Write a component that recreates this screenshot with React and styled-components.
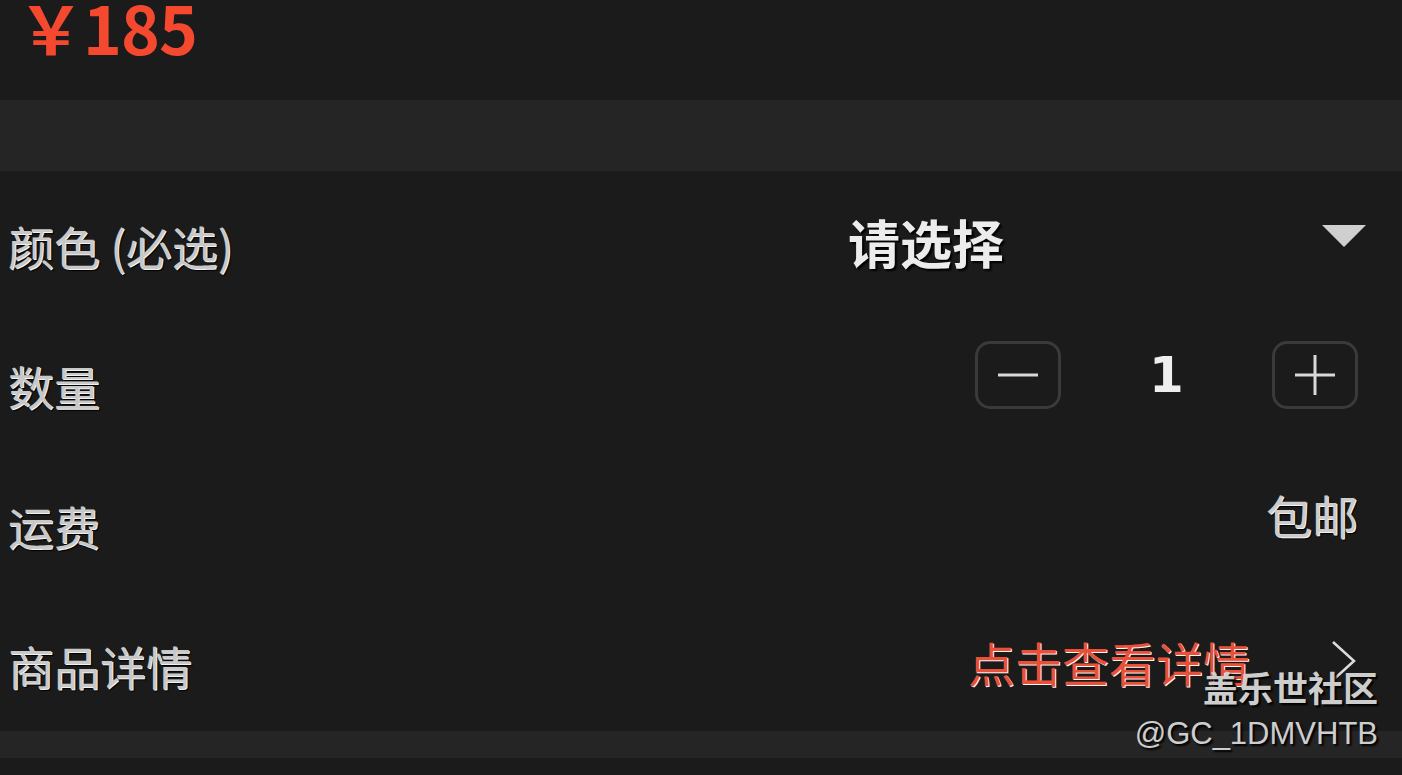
import React from "react";
import styled, { createGlobalStyle } from "styled-components";

const GlobalStyle = createGlobalStyle`
  html, body {
    margin: 0;
    padding: 0;
    background: #1b1b1b;
  }
  body {
    font-family: "Noto Sans CJK SC", "Noto Sans", sans-serif;
  }
`;

const Page = styled.div`
  width: 1402px;
  height: 775px;
  overflow: hidden;
  position: relative;
  background: #1b1b1b;
`;

const PriceBar = styled.div`
  height: 100px;
  overflow: hidden;
  padding-left: 18px;
`;

const Price = styled.div`
  margin-top: -26px;
  font-size: 66px;
  line-height: 104px;
  font-weight: 700;
  color: #f4492f;
  letter-spacing: -1px;
`;

const Divider = styled.div`
  height: ${(p) => p.h}px;
  background: #252525;
`;

const List = styled.div`
  display: flex;
  flex-direction: column;
`;

const Row = styled.div`
  height: 140px;
  display: flex;
  align-items: center;
  justify-content: space-between;
  padding: 0 44px 0 8px;
`;

const Label = styled.div`
  font-size: 46px;
  color: #c8c8c8;
  text-shadow: 1px 1px 0 #f2f2f2, 2px 2px 1px #000;
  margin-top: ${(p) => p.mt || 0}px;
`;

const SelectWrap = styled.div`
  flex: 1;
  display: flex;
  align-items: center;
  justify-content: flex-end;
  margin-right: -8px;
`;

const SelectText = styled.div`
  font-size: 52px;
  font-weight: 700;
  color: #ececec;
  text-shadow: 2px 2px 2px #000;
  margin-right: 318px;
`;

const Triangle = styled.div`
  width: 0;
  height: 0;
  border-left: 22px solid transparent;
  border-right: 22px solid transparent;
  border-top: 22px solid #cfcfcf;
  margin-top: -10px;
`;

const Stepper = styled.div`
  display: flex;
  align-items: center;
  margin-top: -12px;
`;

const StepButton = styled.div`
  width: 86px;
  height: 68px;
  box-sizing: border-box;
  border: 3px solid #3a3a3a;
  border-radius: 15px;
  display: flex;
  align-items: center;
  justify-content: center;
`;

const Count = styled.div`
  width: 211px;
  text-align: center;
  font-family: "DejaVu Sans", sans-serif;
  font-size: 50px;
  font-weight: 700;
  color: #eeeeee;
`;

const Value = styled.div`
  font-size: 46px;
  color: #cbcbcb;
  text-shadow: 1px 1px 0 #f2f2f2, 2px 2px 1px #000;
  margin-top: -14px;
`;

const Link = styled.div`
  display: flex;
  align-items: center;
  gap: 80px;
`;

const LinkText = styled.div`
  font-size: 47px;
  color: #e8503a;
  text-shadow: 1px 1px 0 #fff3f0;
`;

const Watermark = styled.div`
  position: absolute;
  right: 24px;
  bottom: 24px;
  display: flex;
  flex-direction: column;
  align-items: flex-end;
  color: #cdcdcd;
  text-shadow: 2px 2px 2px #000;
  line-height: 1.1;
`;

const MarkTitle = styled.div`
  font-size: 35px;
  font-weight: 700;
  margin-bottom: 10px;
`;

const MarkId = styled.div`
  font-family: "Liberation Sans", sans-serif;
  font-size: 31px;
`;

const Minus = () => (
  <svg width="44" height="8" viewBox="0 0 44 8">
    <line x1="2" y1="4" x2="42" y2="4" stroke="#d8d8d8" strokeWidth="3" />
  </svg>
);

const Plus = () => (
  <svg width="44" height="44" viewBox="0 0 44 44">
    <line x1="2" y1="22" x2="42" y2="22" stroke="#d8d8d8" strokeWidth="3" />
    <line x1="22" y1="2" x2="22" y2="42" stroke="#d8d8d8" strokeWidth="3" />
  </svg>
);

const Chevron = () => (
  <svg width="28" height="44" viewBox="0 0 28 44">
    <polyline points="3,3 24,22 3,41" fill="none" stroke="#dcdcdc" strokeWidth="2.5" />
  </svg>
);

export default function App() {
  return (
    <Page>
      <GlobalStyle />
      <PriceBar>
        <Price>￥185</Price>
      </PriceBar>
      <Divider h={71} />
      <List>
        <Row>
          <Label mt={8}>颜色 (必选)</Label>
          <SelectWrap>
            <SelectText>请选择</SelectText>
            <Triangle />
          </SelectWrap>
        </Row>
        <Row>
          <Label mt={8}>数量</Label>
          <Stepper>
            <StepButton>
              <Minus />
            </StepButton>
            <Count>1</Count>
            <StepButton>
              <Plus />
            </StepButton>
          </Stepper>
        </Row>
        <Row>
          <Label mt={8}>运费</Label>
          <Value>包邮</Value>
        </Row>
        <Row>
          <Label mt={8}>商品详情</Label>
          <Link>
            <LinkText>点击查看详情</LinkText>
            <Chevron />
          </Link>
        </Row>
      </List>
      <Divider h={27} />
      <Watermark>
        <MarkTitle>盖乐世社区</MarkTitle>
        <MarkId>@GC_1DMVHTB</MarkId>
      </Watermark>
    </Page>
  );
}
